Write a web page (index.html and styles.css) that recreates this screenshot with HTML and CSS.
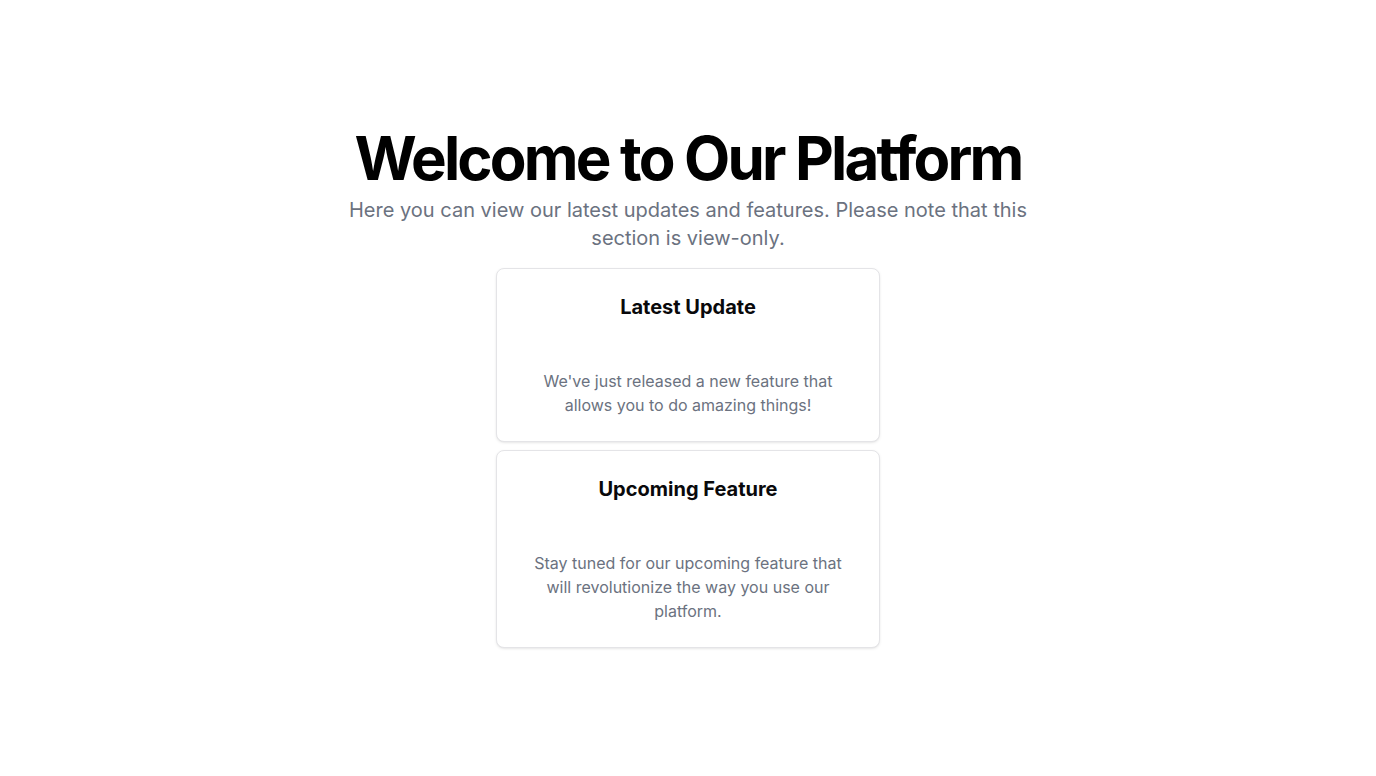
FILE: index.html
```html
<!DOCTYPE html>
<html lang="en">
<head>
<meta charset="utf-8">
<title>Welcome to Our Platform</title>
<link rel="stylesheet" href="styles.css">
</head>
<body>
<main class="page">
  <section class="hero">
    <div class="intro">
      <h1 class="title">Welcome to Our Platform</h1>
      <p class="lead">Here you can view our latest updates and features. Please note that this section is view-only.</p>
    </div>
    <div class="cards">
      <article class="card">
        <header class="card-header">
          <h3 class="card-title">Latest Update</h3>
        </header>
        <div class="card-content">
          <p class="card-text">We've just released a new feature that allows you to do amazing things!</p>
        </div>
      </article>
      <article class="card">
        <header class="card-header">
          <h3 class="card-title">Upcoming Feature</h3>
        </header>
        <div class="card-content">
          <p class="card-text">Stay tuned for our upcoming feature that will revolutionize the way you use our platform.</p>
        </div>
      </article>
    </div>
  </section>
</main>
</body>
</html>
```

FILE: styles.css
```css
* { box-sizing: border-box; }
html, body { margin: 0; padding: 0; background: #ffffff; }
body {
  font-family: Inter, "Noto Sans", "Liberation Sans", sans-serif;
  color: #09090b;
}
.page {
  min-height: 100vh;
  display: flex;
  align-items: center;
  justify-content: center;
  padding: 0 16px;
}
.hero {
  display: flex;
  flex-direction: column;
  align-items: center;
  gap: 16px;
  text-align: center;
}
.intro {
  display: flex;
  flex-direction: column;
  align-items: center;
  gap: 8px;
}
.title {
  margin: 0;
  font-size: 60px;
  line-height: 1;
  font-weight: 700;
  letter-spacing: -0.047em;
  color: #000;
}
.lead {
  margin: 0;
  max-width: 700px;
  font-size: 20px;
  line-height: 28px;
  color: #6b7280;
}
.cards {
  width: 384px;
  display: flex;
  flex-direction: column;
  gap: 8px;
}
.card {
  border: 1px solid #e4e4e7;
  border-radius: 8px;
  background: #fff;
  box-shadow: 0 1px 3px 0 rgba(0, 0, 0, 0.08), 0 1px 2px -1px rgba(0, 0, 0, 0.08);
}
.card-header {
  padding: 24px;
}
.card-title {
  margin: 0;
  font-size: 20px;
  line-height: 28px;
  font-weight: 700;
  color: #09090b;
}
.card-content {
  padding: 24px;
}
.card-text {
  margin: 0;
  font-size: 16px;
  line-height: 24px;
  color: #6b7280;
}
```
